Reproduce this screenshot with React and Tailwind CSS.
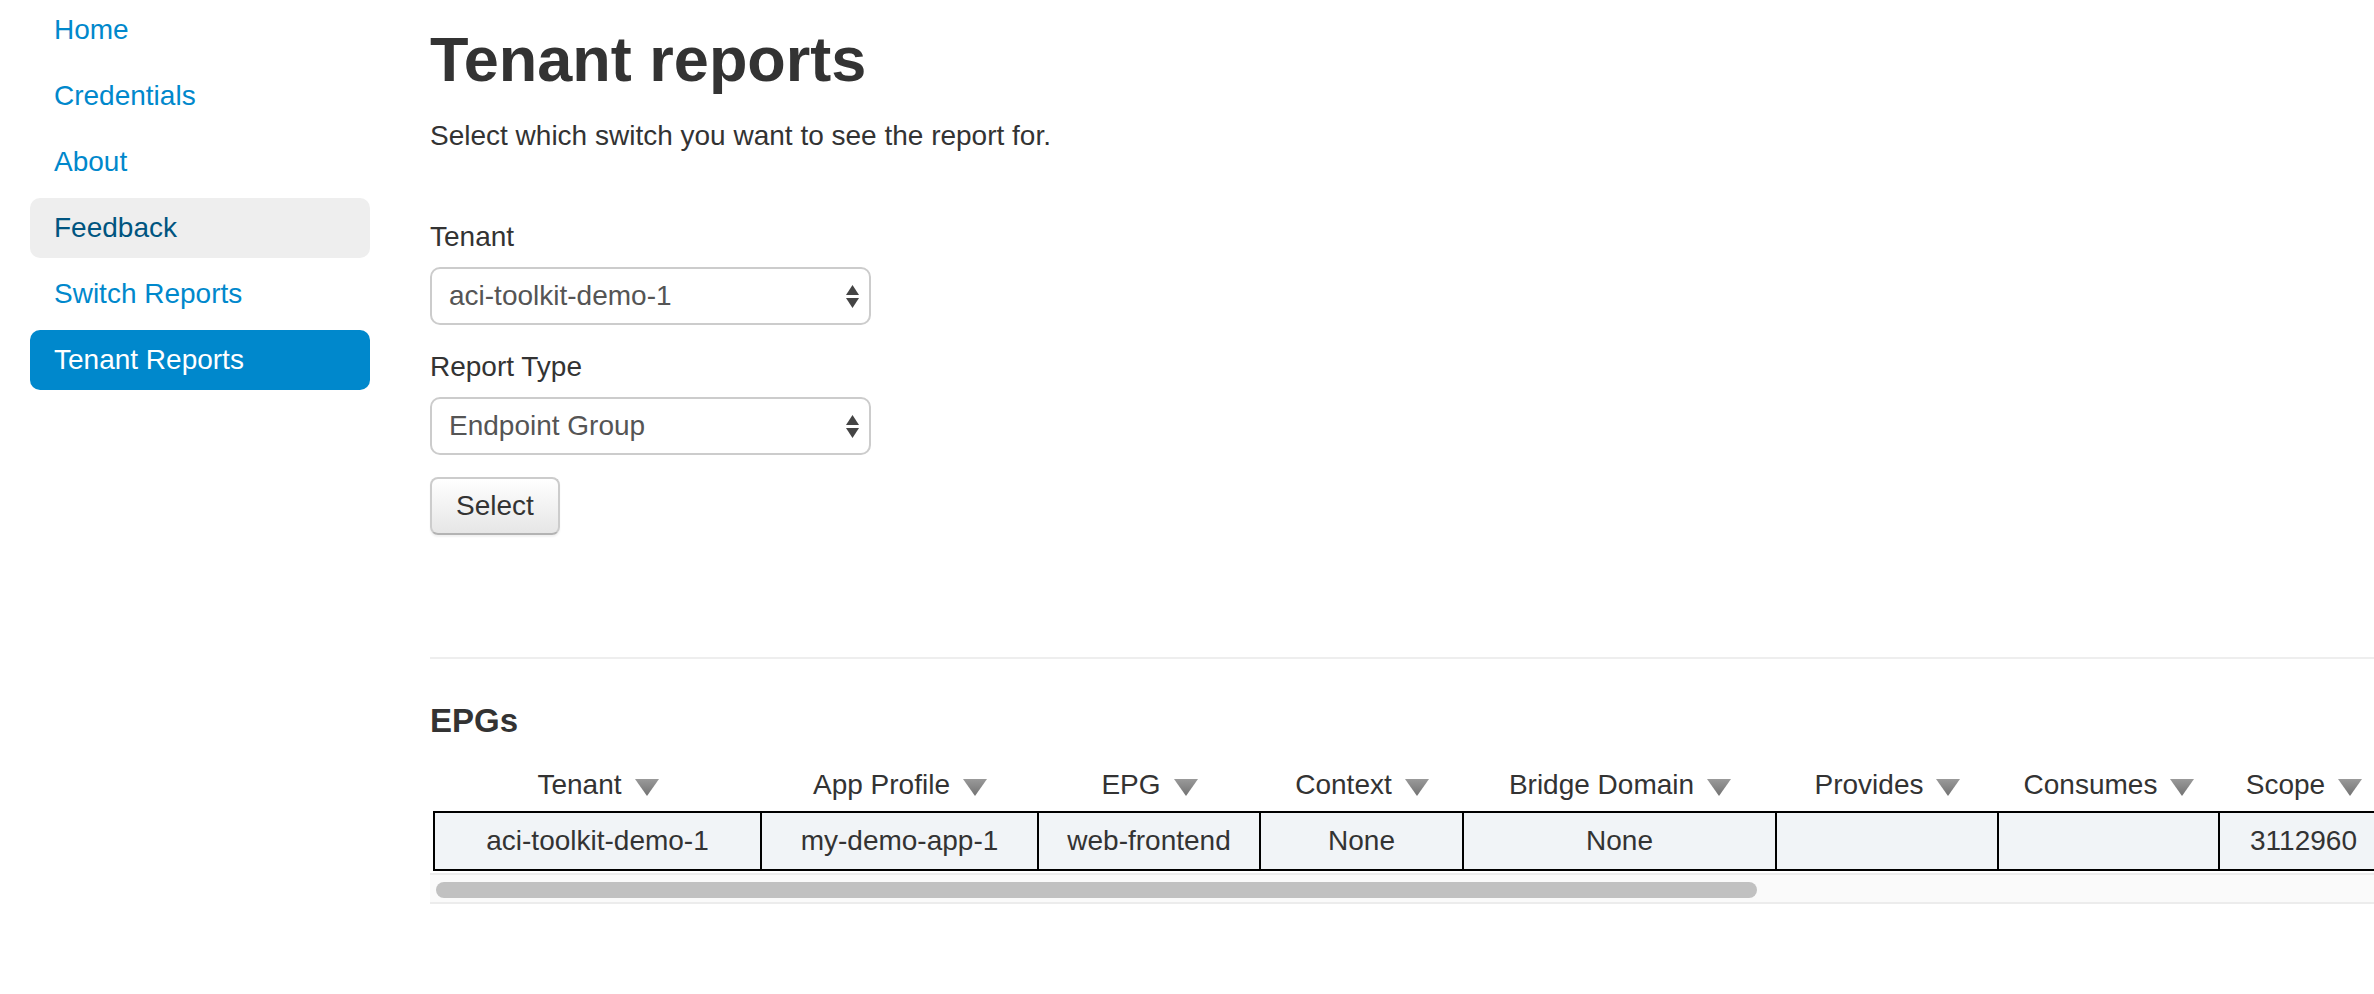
import React from 'react'

const navItems = [
  { label: 'Home' },
  { label: 'Credentials' },
  { label: 'About' },
  { label: 'Feedback', hover: true },
  { label: 'Switch Reports' },
  { label: 'Tenant Reports', active: true },
]

const columns = [
  { name: 'Tenant',        w: 'w-[327px]', value: 'aci-toolkit-demo-1' },
  { name: 'App Profile',   w: 'w-[277px]', value: 'my-demo-app-1' },
  { name: 'EPG',           w: 'w-[222px]', value: 'web-frontend' },
  { name: 'Context',       w: 'w-[203px]', value: 'None' },
  { name: 'Bridge Domain', w: 'w-[313px]', value: 'None' },
  { name: 'Provides',      w: 'w-[222px]', value: '' },
  { name: 'Consumes',      w: 'w-[221px]', value: '' },
  { name: 'Scope',         w: 'w-[169px]', value: '3112960' },
]

export default function App() {
  return (
    <div className="flex w-full h-screen overflow-hidden bg-white font-['Liberation_Sans',Arial,sans-serif] text-[#333]">

      {/* ── Sidebar ── */}
      <nav className="shrink-0 w-[370px] pl-[30px] flex flex-col gap-[6px]">
        {navItems.map(item => (
          <a
            key={item.label}
            className={
              'block h-[60px] leading-[60px] px-[24px] rounded-[10px] text-[28px] no-underline ' +
              (item.active ? 'bg-[#0088cc] text-white' : item.hover ? 'bg-[#eeeeee] text-[#005580]' : 'text-[#0088cc]')
            }
          >
            {item.label}
          </a>
        ))}
      </nav>

      {/* ── Main ── */}
      <main className="flex-1 min-w-0 ml-[60px] pt-[28px]">
        <h1 className="text-[63px] leading-[62px] font-bold tracking-normal">Tenant reports</h1>
        <p className="mt-[26px] text-[28px] leading-[40px]">Select which switch you want to see the report for.</p>

        <form className="mt-[61px] flex flex-col items-start" onSubmit={e => e.preventDefault()}>
          <label className="text-[28px] leading-[40px] mb-[10px]">Tenant</label>
          <FakeSelect value="aci-toolkit-demo-1" />
          <label className="mt-[22px] text-[28px] leading-[40px] mb-[10px]">Report Type</label>
          <FakeSelect value="Endpoint Group" />
          <button
            type="submit"
            className="mt-[22px] h-[58px] px-[24px] rounded-[8px] border-2 border-[#cccccc] border-b-[#b3b3b3] bg-gradient-to-b from-white to-[#e6e6e6] text-[28px] leading-[40px] text-[#333] shadow-[0_2px_2px_rgba(0,0,0,0.06)]"
          >
            Select
          </button>
        </form>

        <div className="mt-[122px] h-[2px] bg-[#eeeeee]" />

        <h2 className="mt-[42px] text-[33px] leading-[40px] font-bold">EPGs</h2>

        {/* ── Tabela ── */}
        <div className="mt-[26px] overflow-hidden">
          <div className="ml-[3px] w-max">
            <div className="flex pl-[2px]">
              {columns.map(c => (
                <div key={c.name} className={c.w + ' shrink-0 flex items-center justify-center gap-[12px] h-[36px] text-[28px] leading-[36px]'}>
                  <span>{c.name}</span>
                  <SortIcon />
                </div>
              ))}
            </div>
            <div className="mt-[8px] flex border-y-2 border-l-2 border-black bg-[#f1f4f7]">
              {columns.map(c => (
                <div key={c.name} className={c.w + ' shrink-0 h-[56px] flex items-center justify-center border-r-2 border-black text-[28px] leading-[36px]'}>
                  {c.value}
                </div>
              ))}
            </div>
          </div>
        </div>

        {/* barra de rolagem */}
        <div className="mt-[2px] h-[31px] border-y-2 border-[#ececec] bg-[#fafafa] pt-[7px] pl-[6px]">
          <div className="h-[16px] w-[1321px] rounded-full bg-[#c1c1c1]" />
        </div>
      </main>
    </div>
  )
}

function FakeSelect({ value }) {
  return (
    <div className="w-[441px] h-[58px] flex items-center justify-between pl-[17px] pr-[10px] rounded-[10px] border-2 border-[#cccccc] bg-white text-[28px] leading-[40px] text-[#555]">
      <span>{value}</span>
      <SelectArrows />
    </div>
  )
}

function SelectArrows() {
  return (
    <svg width="13" height="23" viewBox="0 0 13 23">
      <polygon points="6.5,0 13,10 0,10" fill="#444" />
      <polygon points="0,13 13,13 6.5,23" fill="#444" />
    </svg>
  )
}

function SortIcon() {
  return (
    <svg width="26" height="19" viewBox="0 0 26 19" className="mt-[5px] shrink-0">
      <defs>
        <linearGradient id="sortGrad" x1="0" y1="0" x2="0" y2="1">
          <stop offset="0" stopColor="#9a9a9a" />
          <stop offset="1" stopColor="#727272" />
        </linearGradient>
      </defs>
      <polygon points="1,1 25,1 13,18" fill="url(#sortGrad)" />
    </svg>
  )
}
